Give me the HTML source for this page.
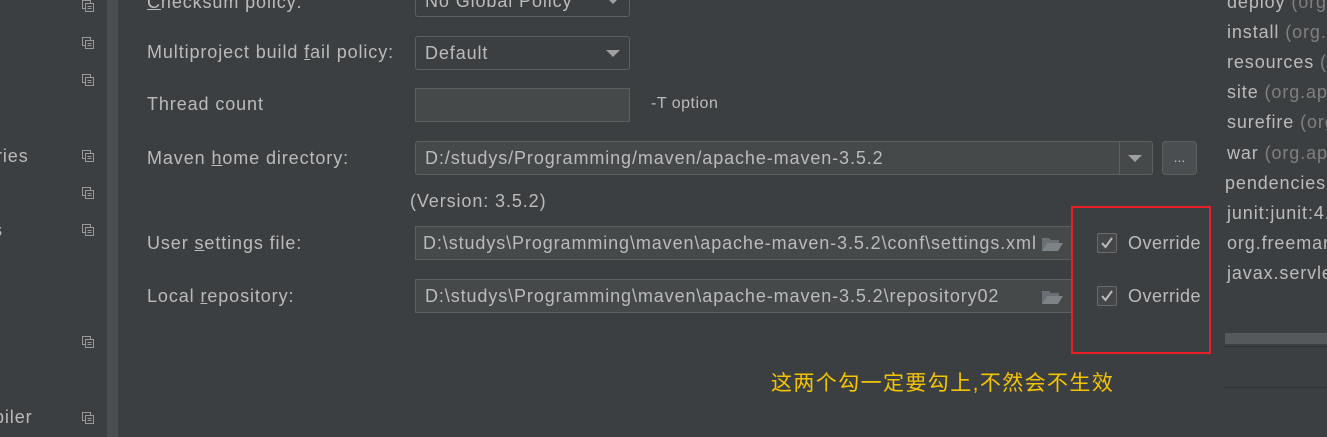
<!DOCTYPE html>
<html><head><meta charset="utf-8"><style>
*{margin:0;padding:0;box-sizing:border-box}
body{width:1327px;height:437px;overflow:hidden;background:#3c3f41;font-family:"Liberation Sans","Noto Sans CJK SC",sans-serif;font-size:18px;letter-spacing:0.9px;color:#bbbbbb;position:relative}
.a{position:absolute;white-space:nowrap}
.side{left:0;top:0;width:107px;height:437px;background:#3c3f41;overflow:hidden}
.strip{left:107px;top:0;width:11px;height:437px;background:#4b4e51}
.ic{position:absolute;left:82px;width:12px;height:12px}
.lbl{left:147px}
.combo{position:absolute;left:415px;width:215px;height:34px;border:1px solid #5e6060;border-radius:3px;background:#3c3f41}
.fld{position:absolute;height:34px;border:1px solid #5e6060;background:#45494a;overflow:hidden}
.tri{position:absolute;width:0;height:0;border-left:7px solid transparent;border-right:7px solid transparent;border-top:7px solid #a0a0a0}
.cb{position:absolute;left:1097px;width:20px;height:20px;border:1px solid #6b6b6b;border-radius:2px;background:#43474a}
.rt{left:2px;color:#bbb}
.g{color:#808080}
u{text-decoration:underline}
</style></head><body>
<div class="a side">
<div class="a" style="left:-4px;top:146px">ries</div>
<div class="a" style="left:-7px;top:220px">s</div>
<div class="a" style="left:-6px;top:407px">piler</div>
</div>
<div class="a strip"></div>
<svg class="ic" style="top:0"><rect x="0.5" y="0.5" width="8" height="8" fill="none" stroke="#999"/><rect x="3.5" y="3.5" width="8" height="8" fill="#3c3f41" stroke="#999"/><path d="M5.5 6.5h4M5.5 8.5h4" stroke="#999"/></svg>
<svg class="ic" style="top:37px"><rect x="0.5" y="0.5" width="8" height="8" fill="none" stroke="#999"/><rect x="3.5" y="3.5" width="8" height="8" fill="#3c3f41" stroke="#999"/><path d="M5.5 6.5h4M5.5 8.5h4" stroke="#999"/></svg>
<svg class="ic" style="top:74px"><rect x="0.5" y="0.5" width="8" height="8" fill="none" stroke="#999"/><rect x="3.5" y="3.5" width="8" height="8" fill="#3c3f41" stroke="#999"/><path d="M5.5 6.5h4M5.5 8.5h4" stroke="#999"/></svg>
<svg class="ic" style="top:150px"><rect x="0.5" y="0.5" width="8" height="8" fill="none" stroke="#999"/><rect x="3.5" y="3.5" width="8" height="8" fill="#3c3f41" stroke="#999"/><path d="M5.5 6.5h4M5.5 8.5h4" stroke="#999"/></svg>
<svg class="ic" style="top:187px"><rect x="0.5" y="0.5" width="8" height="8" fill="none" stroke="#999"/><rect x="3.5" y="3.5" width="8" height="8" fill="#3c3f41" stroke="#999"/><path d="M5.5 6.5h4M5.5 8.5h4" stroke="#999"/></svg>
<svg class="ic" style="top:224px"><rect x="0.5" y="0.5" width="8" height="8" fill="none" stroke="#999"/><rect x="3.5" y="3.5" width="8" height="8" fill="#3c3f41" stroke="#999"/><path d="M5.5 6.5h4M5.5 8.5h4" stroke="#999"/></svg>
<svg class="ic" style="top:336px"><rect x="0.5" y="0.5" width="8" height="8" fill="none" stroke="#999"/><rect x="3.5" y="3.5" width="8" height="8" fill="#3c3f41" stroke="#999"/><path d="M5.5 6.5h4M5.5 8.5h4" stroke="#999"/></svg>
<svg class="ic" style="top:412px"><rect x="0.5" y="0.5" width="8" height="8" fill="none" stroke="#999"/><rect x="3.5" y="3.5" width="8" height="8" fill="#3c3f41" stroke="#999"/><path d="M5.5 6.5h4M5.5 8.5h4" stroke="#999"/></svg>

<div class="a lbl" style="top:-8px"><u>C</u>hecksum policy:</div>
<div class="a lbl" style="top:42px">Multiproject build <u>f</u>ail policy:</div>
<div class="a lbl" style="top:94px">Thread count</div>
<div class="a lbl" style="top:148px">Maven <u>h</u>ome directory:</div>
<div class="a lbl" style="top:233px">User <u>s</u>ettings file:</div>
<div class="a lbl" style="top:286px">Local <u>r</u>epository:</div>

<div class="combo" style="top:-17px"><span class="a" style="left:9px;top:7px">No Global Policy</span><div class="tri" style="left:190px;top:13px"></div></div>
<div class="combo" style="top:36px"><span class="a" style="left:9px;top:6px">Default</span><div class="tri" style="left:190px;top:13px"></div></div>
<div class="fld" style="left:415px;top:88px;width:215px"></div>
<div class="a" style="left:651px;top:95px;font-size:16px;letter-spacing:0.5px">-T option</div>

<div class="fld" style="left:415px;top:141px;width:738px;border-radius:3px"><span class="a" style="left:9px;top:6px">D:/studys/Programming/maven/apache-maven-3.5.2</span><div class="a" style="left:703px;top:0;width:1px;height:32px;background:#5e6060"></div><div class="tri" style="left:712px;top:13px"></div></div>
<div class="a" style="left:1162px;top:141px;width:35px;height:34px;border:1px solid #5e6060;border-radius:4px;background:#4a4e50;text-align:center;line-height:30px;font-size:14px;letter-spacing:0">...</div>
<div class="a" style="left:410px;top:191px">(Version: 3.5.2)</div>

<div class="fld" style="left:415px;top:226px;width:660px"><span class="a" style="left:7px;top:6px">D:\studys\Programming\maven\apache-maven-3.5.2\conf\settings.xml</span></div>
<div class="fld" style="left:415px;top:279px;width:660px"><span class="a" style="left:9px;top:6px">D:\studys\Programming\maven\apache-maven-3.5.2\repository02</span></div>
<svg class="a" style="left:1041px;top:236px" width="23" height="16"><path d="M1 2h7l2 2h8v3H6L1 15z" fill="#6a7073"/><path d="M6 7h16l-5 8H1z" fill="#7d8487"/></svg>
<svg class="a" style="left:1041px;top:289px" width="23" height="16"><path d="M1 2h7l2 2h8v3H6L1 15z" fill="#6a7073"/><path d="M6 7h16l-5 8H1z" fill="#7d8487"/></svg>

<div class="a" style="left:1071px;top:206px;width:140px;height:148px;border:2px solid #e8202a;background:#3c3f41"></div>
<div class="cb" style="top:233px"><svg width="18" height="18"><path d="M4 9l3.5 4L14 4" fill="none" stroke="#bbb" stroke-width="2"/></svg></div>
<div class="cb" style="top:286px"><svg width="18" height="18"><path d="M4 9l3.5 4L14 4" fill="none" stroke="#bbb" stroke-width="2"/></svg></div>
<div class="a" style="left:1128px;top:233px;letter-spacing:0.5px">Override</div>
<div class="a" style="left:1128px;top:286px;letter-spacing:0.5px">Override</div>

<div class="a" style="left:771px;top:367px;color:#f5c400;font-size:21px;letter-spacing:1.4px">这两个勾一定要勾上,不然会不生效</div>

<div class="a" style="left:1225px;top:0;width:102px;height:437px;background:#3c3f41;overflow:hidden">
<div class="a rt" style="top:-8px">deploy <span class="g">(org.apache</span></div>
<div class="a rt" style="top:22px">install <span class="g">(org.apache</span></div>
<div class="a rt" style="top:52px">resources <span class="g">(org</span></div>
<div class="a rt" style="top:82px">site <span class="g">(org.apache</span></div>
<div class="a rt" style="top:112px">surefire <span class="g">(org</span></div>
<div class="a rt" style="top:143px">war <span class="g">(org.apache</span></div>
<div class="a" style="left:0;top:173px">pendencies</div>
<div class="a rt" style="top:203px">junit:junit:4.12</div>
<div class="a rt" style="top:233px">org.freemarker</div>
<div class="a rt" style="top:263px">javax.servlet</div>
<div class="a" style="left:0;top:333px;width:102px;height:11px;background:#56595b"></div>
<div class="a" style="left:0;top:346px;width:102px;height:1px;background:#2f3133"></div>
<div class="a" style="left:0;top:387px;width:102px;height:1px;background:#2f3133"></div>
</div>
</body></html>
